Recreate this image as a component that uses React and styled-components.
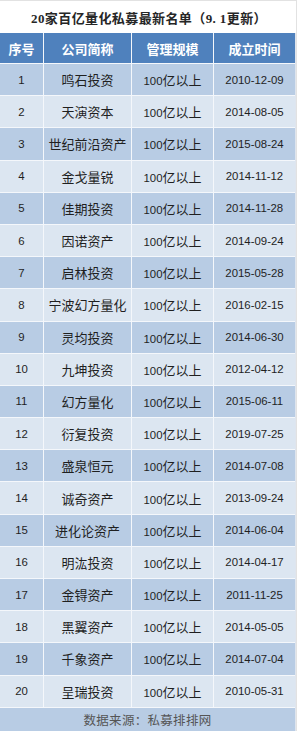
import React from "react";
import styled, { createGlobalStyle } from "styled-components";

const Global = createGlobalStyle`
  html, body { margin: 0; padding: 0; background: #ffffff; }
  body { width: 297px; overflow: hidden; }
`;

const Page = styled.div`
  width: 296px;
  height: 731px;
  background: #ffffff;
  display: flex;
  flex-direction: column;
  border-right: 1px solid #e2e2e2;
`;

const Title = styled.div`
  height: 32px;
  border-top: 1px solid #e2e2e2;
  display: flex;
  align-items: center;
  justify-content: center;
  padding-left: 2px;
  font-family: "Liberation Serif", "Noto Sans CJK SC", serif;
  font-size: 13px;
  font-weight: 700;
  color: #262626;
  letter-spacing: 0.4px;
`;

const Table = styled.div`
  width: 295px;
  display: grid;
  grid-template-columns: 43px 87px 81px 81px;
  grid-template-rows: 30px repeat(20, 31.2px) 23px;
  column-gap: 1px;
  row-gap: 1px;
  background: #f4f7fb;
  border-right: 1px solid #dfe5ee;
`;

const HeadCell = styled.div`
  background: #4f81bd;
  color: #ffffff;
  display: flex;
  align-items: center;
  justify-content: center;
  font-family: "Noto Sans CJK SC", sans-serif;
  font-weight: 700;
  font-size: 13px;
`;

const Cell = styled.div`
  background: ${(p) => (p.$odd ? "#b8cce4" : "#dce6f1")};
  color: #1f1f1f;
  display: flex;
  align-items: center;
  justify-content: center;
  font-family: ${(p) =>
    p.$num
      ? `"Liberation Sans", "Noto Sans CJK SC", sans-serif`
      : `"Noto Sans CJK SC", sans-serif`};
  font-size: ${(p) => (p.$num ? "11.4px" : "13px")};
  white-space: nowrap;
`;

const Amount = styled.span`
  font-family: "Liberation Sans", sans-serif;
  font-size: 11.4px;
  & > em {
    font-style: normal;
    font-family: "Noto Sans CJK SC", sans-serif;
    font-size: 13px;
  }
`;

const Footer = styled.div`
  grid-column: 1 / -1;
  background: #b8cce4;
  display: flex;
  align-items: center;
  justify-content: center;
  font-family: "Liberation Serif", "Noto Sans CJK SC", serif;
  font-size: 12.5px;
  color: #555555;
  letter-spacing: 0.3px;
`;

const rows = [
  ["鸣石投资", "2010-12-09"],
  ["天演资本", "2014-08-05"],
  ["世纪前沿资产", "2015-08-24"],
  ["金戈量锐", "2014-11-12"],
  ["佳期投资", "2014-11-28"],
  ["因诺资产", "2014-09-24"],
  ["启林投资", "2015-05-28"],
  ["宁波幻方量化", "2016-02-15"],
  ["灵均投资", "2014-06-30"],
  ["九坤投资", "2012-04-12"],
  ["幻方量化", "2015-06-11"],
  ["衍复投资", "2019-07-25"],
  ["盛泉恒元", "2014-07-08"],
  ["诚奇资产", "2013-09-24"],
  ["进化论资产", "2014-06-04"],
  ["明汯投资", "2014-04-17"],
  ["金锝资产", "2011-11-25"],
  ["黑翼资产", "2014-05-05"],
  ["千象资产", "2014-07-04"],
  ["呈瑞投资", "2010-05-31"],
];

export default function App() {
  return (
    <Page>
      <Global />
      <Title>20家百亿量化私募最新名单（9. 1更新）</Title>
      <Table>
        <HeadCell>序号</HeadCell>
        <HeadCell>公司简称</HeadCell>
        <HeadCell>管理规模</HeadCell>
        <HeadCell>成立时间</HeadCell>
        {rows.map(([name, date], i) => {
          const odd = i % 2 === 0;
          return (
            <React.Fragment key={i}>
              <Cell $odd={odd} $num>{i + 1}</Cell>
              <Cell $odd={odd}>{name}</Cell>
              <Cell $odd={odd}>
                <Amount>
                  100<em>亿以上</em>
                </Amount>
              </Cell>
              <Cell $odd={odd} $num>{date}</Cell>
            </React.Fragment>
          );
        })}
        <Footer>数据来源：私募排排网</Footer>
      </Table>
    </Page>
  );
}
